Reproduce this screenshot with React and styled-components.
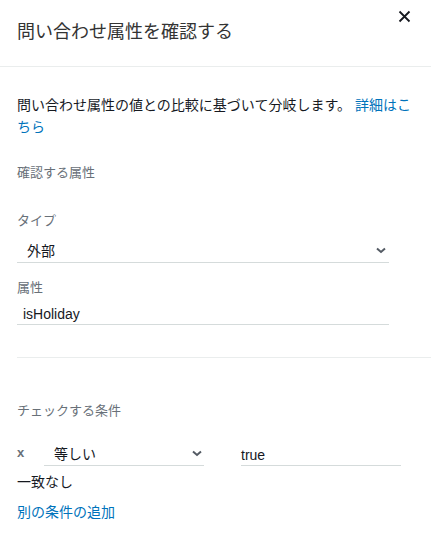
import React from 'react';
import styled, { createGlobalStyle } from 'styled-components';

const GlobalStyle = createGlobalStyle`
   body {
      margin: 0;
      background: #fff;
      font-family: "Liberation Sans", "Noto Sans CJK JP", sans-serif;
      color: #16191f;
   }
`;

const Panel = styled.div`
   width: 431px;
   height: 558px;
   background: #fff;
`;

const Header = styled.header`
   display: flex;
   justify-content: space-between;
   align-items: flex-start;
   height: 66px;
   padding: 0 20px 0 17px;
   border-bottom: 1px solid #eaeded;
`;

const Title = styled.h2`
   margin: 20px 0 0;
   font-size: 18px;
   font-weight: 400;
   line-height: 24px;
   color: #333;
`;

const CloseButton = styled.button`
   display: flex;
   margin-top: 10px;
   padding: 0;
   border: 0;
   background: none;
   cursor: pointer;
`;

const Body = styled.div`
   padding-left: 17px;
`;

const Description = styled.p`
   width: 400px;
   margin: 27px 0 0;
   font-size: 14px;
   line-height: 22px;
   color: #16191f;
`;

const Link = styled.a`
   color: #0073bb;
   text-decoration: none;
   cursor: pointer;
`;

// section headings and field labels share the same grey caption style
const Caption = styled.div`
   margin-top: ${p => p.top}px;
   font-size: 13px;
   line-height: 18px;
   color: #687078;
`;

const Field = styled.div`
   display: flex;
   align-items: center;
   justify-content: space-between;
   box-sizing: border-box;
   width: ${p => p.width}px;
   height: ${p => p.height}px;
   padding: ${p => p.padTop}px ${p => p.padRight || 0}px 0 ${p => p.padLeft || 0}px;
   border-bottom: 1px solid #d5dbdb;
   font-size: 14px;
   color: #16191f;
`;

const Divider = styled.hr`
   margin: 32px 0 0;
   border: 0;
   border-top: 1px solid #eaeded;
`;

const ConditionRow = styled.div`
   display: flex;
   align-items: flex-end;
   margin-top: 18px;
`;

const RemoveMark = styled.span`
   width: 27px;
   padding-bottom: 6px;
   font-size: 13px;
   font-weight: 700;
   color: #687078;
`;

const Spacer = styled.div`
   width: 37px;
`;

const Note = styled.div`
   margin-top: 5px;
   font-size: 14px;
   line-height: 22px;
   color: #16191f;
`;

const AddLink = styled(Link)`
   display: block;
   margin-top: 8px;
   font-size: 14px;
   line-height: 22px;
`;

const Chevron = () => (
   <svg width="10" height="7" viewBox="0 0 10 7">
      <path d="M1 1.5 L5 5 L9 1.5" fill="none" stroke="#545b64" strokeWidth="2" />
   </svg>
);

const CloseIcon = () => (
   <svg width="13" height="13" viewBox="0 0 13 13">
      <path d="M1.5 1.5 L11.5 11.5 M11.5 1.5 L1.5 11.5" stroke="#16191f" strokeWidth="1.8" />
   </svg>
);

const App = function App(){
   return (
      <Panel>
         <GlobalStyle />
         <Header>
            <Title>問い合わせ属性を確認する</Title>
            <CloseButton aria-label="close"><CloseIcon /></CloseButton>
         </Header>

         <Body>
            <Description>
               問い合わせ属性の値との比較に基づいて分岐します。 <Link>詳細はこちら</Link>
            </Description>

            <Caption top={26}>確認する属性</Caption>

            <Caption top={30}>タイプ</Caption>
            <Field width={372} height={33} padTop={8} padLeft={10} padRight={3}>
               <span>外部</span>
               <Chevron />
            </Field>

            <Caption top={16}>属性</Caption>
            <Field width={372} height={28} padTop={6} padLeft={6}>
               <span>isHoliday</span>
            </Field>

            <Divider />

            <Caption top={44}>チェックする条件</Caption>

            <ConditionRow>
               <RemoveMark>x</RemoveMark>
               <Field width={160} height={28} padTop={3} padLeft={10} padRight={2}>
                  <span>等しい</span>
                  <Chevron />
               </Field>
               <Spacer />
               <Field width={160} height={28} padTop={7}>
                  <span>true</span>
               </Field>
            </ConditionRow>

            <Note>一致なし</Note>
            <AddLink>別の条件の追加</AddLink>
         </Body>
      </Panel>
   );
};

export default App;
